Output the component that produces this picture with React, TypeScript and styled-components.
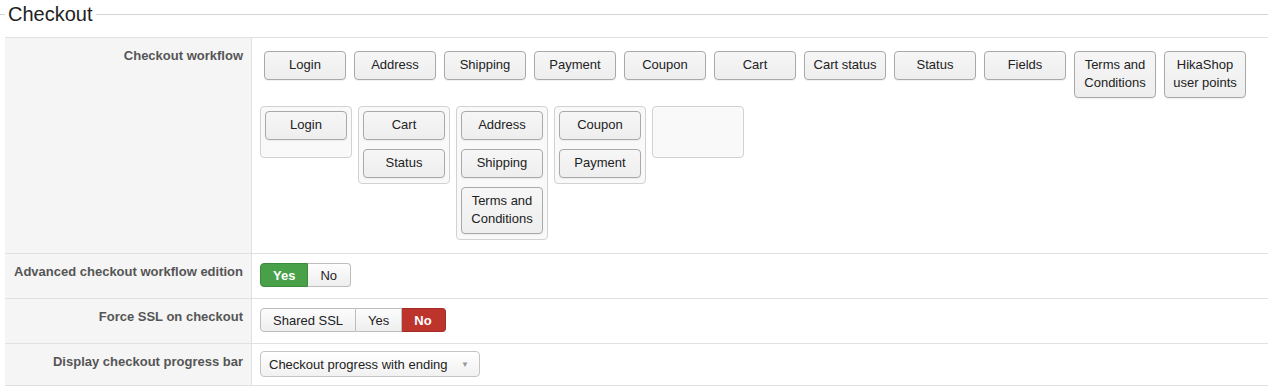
import React from "react";
import styled, { createGlobalStyle, css } from "styled-components";

const GlobalStyle = createGlobalStyle`
  html, body {
    margin: 0;
    padding: 0;
    background: #fff;
    font-family: "Liberation Sans", Arial, sans-serif;
    font-size: 13px;
    color: #333;
  }
`;

const Page = styled.div`
  width: 1268px;
  overflow: hidden;
`;

const Legend = styled.div`
  display: flex;
  align-items: center;
  height: 30px;
  margin-top: -1px;
  &::before {
    content: "";
    width: 5px;
    border-top: 1px solid #d5d5d5;
  }
  &::after {
    content: "";
    flex: 1;
    border-top: 1px solid #d5d5d5;
  }
`;

const LegendText = styled.span`
  font-size: 20px;
  line-height: 28px;
  color: #222;
  padding: 0 3px;
`;

const Table = styled.div`
  margin: 8px 0 0 5px;
  border-top: 1px solid #e1e1e1;
`;

const Row = styled.div`
  display: flex;
  border-bottom: 1px solid #e1e1e1;
`;

const Label = styled.div`
  width: 247px;
  flex: none;
  box-sizing: border-box;
  padding: 10px 8px 0 8px;
  text-align: right;
  font-weight: bold;
  font-size: 13px;
  color: #555;
  background: #f5f5f5;
  border-right: 1px solid #e1e1e1;
`;

const Value = styled.div<{ $pt: number; $pb: number }>`
  flex: 1;
  padding: ${(p) => p.$pt}px 9px ${(p) => p.$pb}px 8px;
`;

const ToolRow = styled.div`
  display: flex;
  flex-wrap: wrap;
  align-items: flex-start;
  gap: 8px;
  padding-left: 4px;
`;

const Block = styled.div`
  width: 82px;
  box-sizing: border-box;
  padding: 4px 4px 5px;
  border: 1px solid #a9a9a9;
  border-radius: 4px;
  background: linear-gradient(#f6f6f6, #eeeeee);
  box-shadow: 0 1px 1px rgba(0, 0, 0, 0.06);
  text-align: center;
  line-height: 18px;
  font-size: 13px;
  color: #222;
`;

const Groups = styled.div`
  display: flex;
  align-items: flex-start;
  gap: 6px;
  margin-top: 8px;
`;

const Group = styled.div`
  width: 92px;
  min-height: 52px;
  box-sizing: border-box;
  padding: 4px 4px 5px;
  border: 1px solid #d2d2d2;
  border-radius: 4px;
  background: #f9f9f9;
  display: flex;
  flex-direction: column;
  gap: 9px;
`;

const Toggle = styled.div`
  display: inline-flex;
`;

const ToggleBtn = styled.span<{ $active?: "green" | "red" }>`
  height: 24px;
  box-sizing: border-box;
  padding: 0 12px;
  line-height: 23px;
  font-size: 13px;
  color: #222;
  border: 1px solid #bdbdbd;
  border-left-width: 0;
  background: linear-gradient(#fdfdfd, #eeeeee);
  &:first-child {
    border-left-width: 1px;
    border-radius: 4px 0 0 4px;
  }
  &:last-child {
    border-radius: 0 4px 4px 0;
    padding-right: 13px;
  }
  ${(p) =>
    p.$active === "green" &&
    css`
      background: #48a048;
      border-color: #3d8b3d;
      color: #fff;
      font-weight: bold;
    `}
  ${(p) =>
    p.$active === "red" &&
    css`
      background: #bd342d;
      border-color: #a52d27;
      color: #fff;
      font-weight: bold;
    `}
`;

const Select = styled.div`
  width: 220px;
  height: 26px;
  box-sizing: border-box;
  display: flex;
  align-items: center;
  justify-content: space-between;
  padding: 0 10px 0 8px;
  border: 1px solid #c4c4c4;
  border-radius: 4px;
  background: linear-gradient(#ffffff, #f1f1f1);
  font-size: 13px;
  color: #222;
`;

const Arrow = styled.span`
  font-size: 8px;
  color: #999;
`;

const workflow = [
  "Login",
  "Address",
  "Shipping",
  "Payment",
  "Coupon",
  "Cart",
  "Cart status",
  "Status",
  "Fields",
  "Terms and Conditions",
  "HikaShop user points",
];

const steps = [
  ["Login"],
  ["Cart", "Status"],
  ["Address", "Shipping", "Terms and Conditions"],
  ["Coupon", "Payment"],
  [],
];

export default function App() {
  return (
    <Page>
      <GlobalStyle />
      <Legend>
        <LegendText>Checkout</LegendText>
      </Legend>
      <Table>
        <Row>
          <Label>Checkout workflow</Label>
          <Value $pt={13} $pb={13}>
            <ToolRow>
              {workflow.map((w) => (
                <Block key={w}>{w}</Block>
              ))}
            </ToolRow>
            <Groups>
              {steps.map((s, i) => (
                <Group key={i}>
                  {s.map((b) => (
                    <Block key={b}>{b}</Block>
                  ))}
                </Group>
              ))}
            </Groups>
          </Value>
        </Row>
        <Row>
          <Label>Advanced checkout workflow edition</Label>
          <Value $pt={9} $pb={11}>
            <Toggle>
              <ToggleBtn $active="green">Yes</ToggleBtn>
              <ToggleBtn>No</ToggleBtn>
            </Toggle>
          </Value>
        </Row>
        <Row>
          <Label>Force SSL on checkout</Label>
          <Value $pt={9} $pb={11}>
            <Toggle>
              <ToggleBtn>Shared SSL</ToggleBtn>
              <ToggleBtn>Yes</ToggleBtn>
              <ToggleBtn $active="red">No</ToggleBtn>
            </Toggle>
          </Value>
        </Row>
        <Row>
          <Label>Display checkout progress bar</Label>
          <Value $pt={7} $pb={8}>
            <Select>
              <span>Checkout progress with ending</span>
              <Arrow>▼</Arrow>
            </Select>
          </Value>
        </Row>
      </Table>
    </Page>
  );
}
